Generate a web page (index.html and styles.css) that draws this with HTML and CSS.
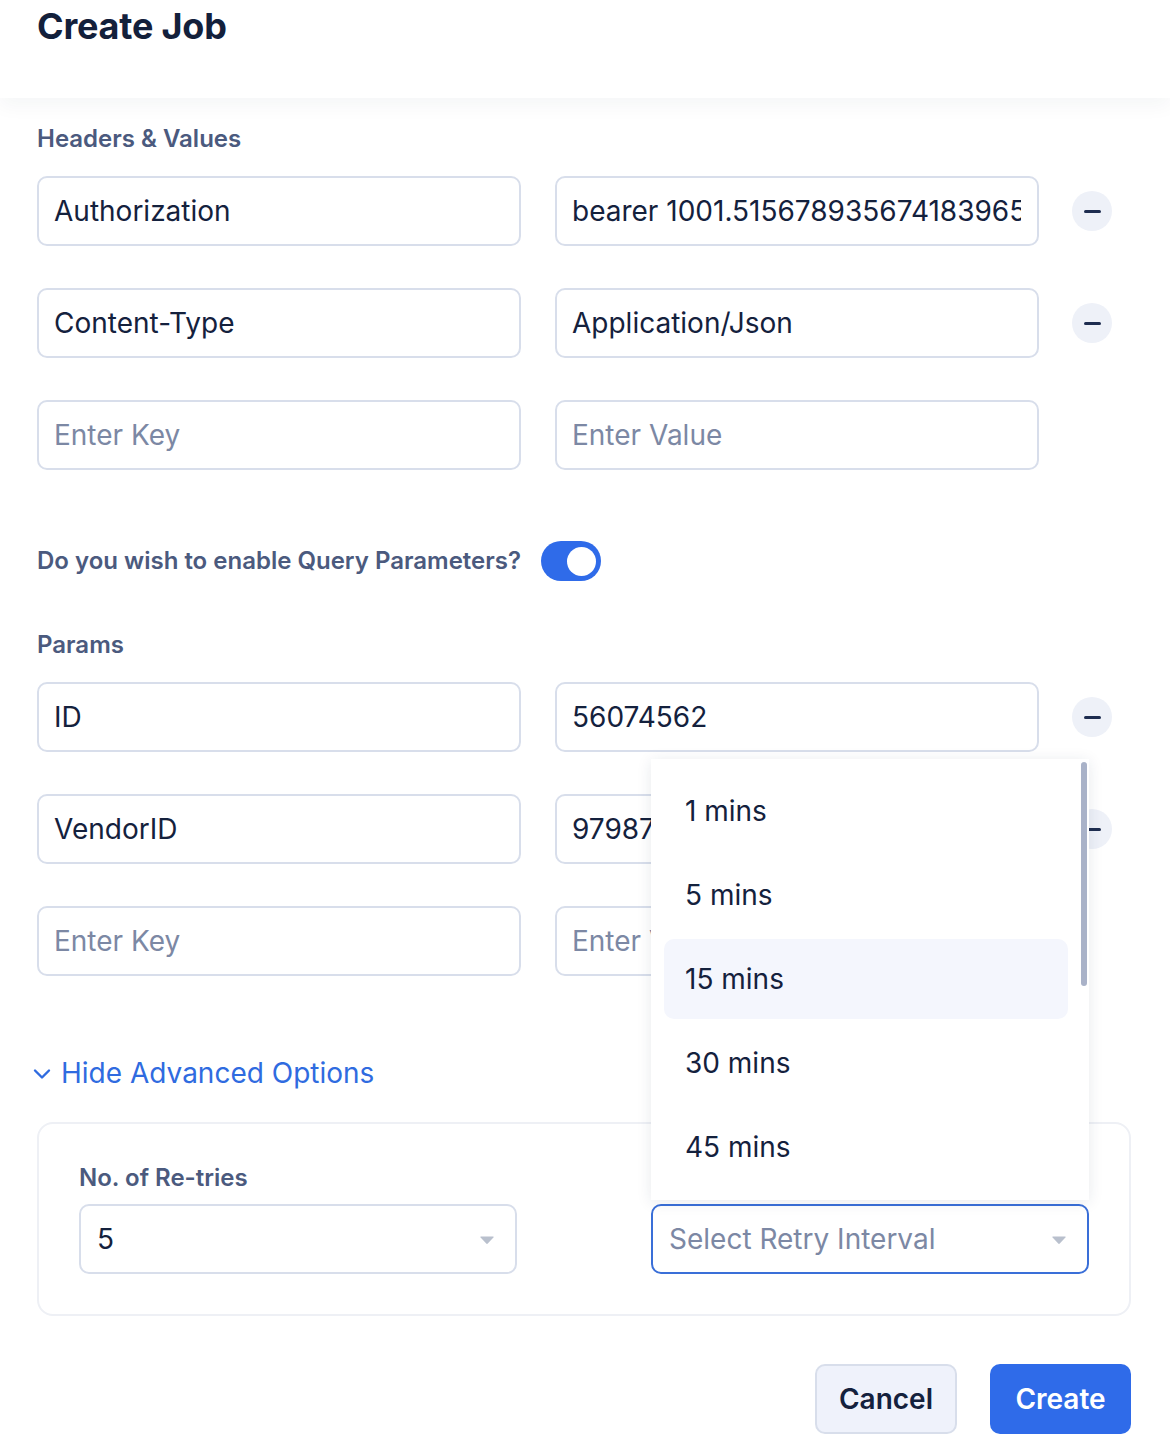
FILE: index.html
```html
<!DOCTYPE html>
<html lang="en">
<head>
<meta charset="utf-8">
<title>Create Job</title>
<link rel="stylesheet" href="styles.css">
</head>
<body>
<header class="header">
  <h1 class="title">Create Job</h1>
</header>
<main class="main">
  <div class="section-label">Headers &amp; Values</div>
  <div class="rows">
    <div class="row">
      <input class="field" value="Authorization">
      <input class="field" value="bearer 1001.515678935674183965432">
      <button class="minus" aria-label="Remove"><span></span></button>
    </div>
    <div class="row">
      <input class="field" value="Content-Type">
      <input class="field" value="Application/Json">
      <button class="minus" aria-label="Remove"><span></span></button>
    </div>
    <div class="row">
      <input class="field" placeholder="Enter Key">
      <input class="field" placeholder="Enter Value">
    </div>
  </div>

  <div class="toggle-row">
    <span class="section-label">Do you wish to enable Query Parameters?</span>
    <span class="toggle"><span class="knob"></span></span>
  </div>

  <div class="section-label params-label">Params</div>
  <div class="rows">
    <div class="row">
      <input class="field" value="ID">
      <input class="field" value="56074562">
      <button class="minus" aria-label="Remove"><span></span></button>
    </div>
    <div class="row">
      <input class="field" value="VendorID">
      <input class="field" value="97987354">
      <button class="minus" aria-label="Remove"><span></span></button>
    </div>
    <div class="row">
      <input class="field" placeholder="Enter Key">
      <input class="field" placeholder="Enter Value">
    </div>
  </div>

  <div class="advanced-toggle">
    <svg class="chevron" width="18" height="12" viewBox="0 0 18 12"><path d="M2 2.5 L9 9.5 L16 2.5" fill="none" stroke="#2f6be0" stroke-width="2.4" stroke-linecap="round" stroke-linejoin="round"/></svg>
    <span>Hide Advanced Options</span>
  </div>

  <div class="card">
    <div class="col">
      <div class="section-label">No. of Re-tries</div>
      <div class="select">
        <span class="select-value">5</span>
        <svg class="caret" width="16" height="10" viewBox="0 0 16 10"><path d="M2 1.5 H14 Q15.2 1.5 14.4 2.6 L8.8 8.6 Q8 9.4 7.2 8.6 L1.6 2.6 Q0.8 1.5 2 1.5 Z" fill="#b9c0cd"/></svg>
      </div>
    </div>
    <div class="col col-end">
      <div class="select select-open">
        <span class="select-placeholder">Select Retry Interval</span>
        <svg class="caret" width="16" height="10" viewBox="0 0 16 10"><path d="M2 1.5 H14 Q15.2 1.5 14.4 2.6 L8.8 8.6 Q8 9.4 7.2 8.6 L1.6 2.6 Q0.8 1.5 2 1.5 Z" fill="#b9c0cd"/></svg>
        <div class="dropdown">
          <div class="option">1 mins</div>
          <div class="option">5 mins</div>
          <div class="option option-active">15 mins</div>
          <div class="option">30 mins</div>
          <div class="option">45 mins</div>
          <div class="scrollbar"></div>
        </div>
      </div>
    </div>
  </div>

  <div class="actions">
    <button class="btn btn-cancel">Cancel</button>
    <button class="btn btn-create">Create</button>
  </div>
</main>
</body>
</html>
```
FILE: styles.css
```css
* { box-sizing: border-box; }
html, body { margin: 0; padding: 0; background: #ffffff; }
body {
  font-family: Inter, "Noto Sans", "Liberation Sans", sans-serif;
  color: #14213d;
  width: 1170px;
  min-height: 1454px;
  overflow: hidden;
}
.header {
  height: 98px;
  padding: 0 37px;
  background: #fff;
  box-shadow: 0 8px 18px rgba(30, 45, 80, 0.045);
  position: relative;
  z-index: 2;
}
.title {
  margin: 0;
  padding-top: 5px;
  font-size: 36px;
  line-height: 42px;
  font-weight: 700;
  color: #13203b;
  letter-spacing: -0.2px;
}
.main {
  padding: 27px 39px 0 37px;
}
.section-label {
  font-size: 24px;
  line-height: 28px;
  font-weight: 600;
  color: #4b5a7e;
}
.rows {
  margin-top: 23px;
  display: flex;
  flex-direction: column;
  gap: 42px;
}
.row {
  display: grid;
  grid-template-columns: 484px 484px 40px;
  column-gap: 34px;
  align-items: center;
}
.row .minus { margin-left: -1px; }
.field {
  height: 70px;
  width: 100%;
  border: 2px solid #d8deeb;
  border-radius: 10px;
  padding: 0 16px 0 15px;
  font-family: inherit;
  font-size: 28px;
  color: #14213d;
  background: #fff;
  outline: none;
  overflow: hidden;
  text-overflow: clip;
}
.field::placeholder { color: #7c88a4; opacity: 1; }
.minus {
  width: 40px;
  height: 40px;
  border-radius: 50%;
  border: none;
  background: #eef1f8;
  padding: 0;
  display: flex;
  align-items: center;
  justify-content: center;
}
.minus span {
  display: block;
  width: 17px;
  height: 3px;
  border-radius: 2px;
  background: #1e2d50;
}
.toggle-row {
  margin-top: 71px;
  display: flex;
  align-items: center;
  gap: 20px;
  height: 40px;
}
.toggle {
  width: 60px;
  height: 40px;
  border-radius: 20px;
  background: #2f6be9;
  display: flex;
  align-items: center;
  justify-content: flex-end;
  padding-right: 5px;
}
.knob {
  width: 29px;
  height: 29px;
  border-radius: 50%;
  background: #fff;
}
.params-label { margin-top: 50px; }
.advanced-toggle {
  margin-top: 80px;
  margin-left: -4px;
  display: flex;
  align-items: center;
  gap: 10px;
  height: 34px;
  font-size: 28px;
  color: #2f6be0;
}
.chevron { margin-top: 2px; }
.card {
  margin-top: 32px;
  border: 2px solid #eef0f5;
  border-radius: 16px;
  padding: 40px 40px 40px 40px;
  display: grid;
  grid-template-columns: 438px 438px;
  column-gap: 134px;
}
.col .section-label { margin-bottom: 12px; }
.col-end { display: flex; flex-direction: column; justify-content: flex-end; }
.select {
  position: relative;
  height: 70px;
  border: 2px solid #d8deeb;
  border-radius: 10px;
  padding: 0 20px 0 16px;
  display: flex;
  align-items: center;
  justify-content: space-between;
  font-size: 28px;
}
.select-open { border-color: #3a6fd8; }
.select-value { color: #14213d; }
.select-placeholder { color: #7c88a4; }
.caret { margin-top: 1px; }
.dropdown {
  position: absolute;
  left: -2px;
  right: -2px;
  bottom: calc(100% + 6px);
  height: 441px;
  background: #fff;
  box-shadow: 0 2px 14px rgba(30, 45, 80, 0.1);
  padding: 12px 21px 0 13px;
  overflow: hidden;
  z-index: 5;
}
.option {
  height: 80px;
  margin-bottom: 4px;
  padding-left: 21px;
  display: flex;
  align-items: center;
  border-radius: 10px;
  font-size: 28px;
  color: #14213d;
}
.option-active { background: #f4f6fd; }
.scrollbar {
  position: absolute;
  right: 2px;
  top: 3px;
  width: 6px;
  height: 224px;
  border-radius: 3px;
  background: #a9b2c8;
}
.actions {
  margin-top: 48px;
  display: flex;
  justify-content: flex-end;
  gap: 33px;
}
.btn {
  height: 70px;
  border-radius: 10px;
  font-family: inherit;
  font-size: 28px;
  font-weight: 600;
  padding: 0;
}
.btn-cancel {
  width: 142px;
  background: #eff2fb;
  border: 2px solid #d8deeb;
  color: #14213d;
}
.btn-create {
  width: 141px;
  background: #2f6be9;
  border: none;
  color: #fff;
}
```
